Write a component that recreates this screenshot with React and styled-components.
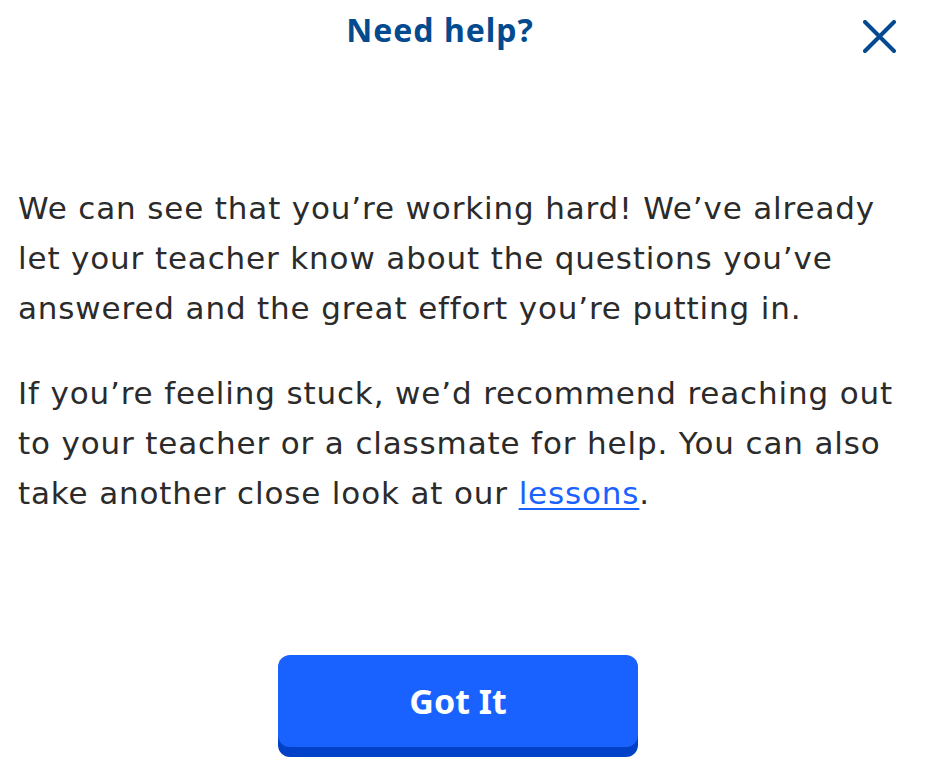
import React from "react";
import styled, { createGlobalStyle } from "styled-components";

const Global = createGlobalStyle`
  html, body { margin: 0; padding: 0; background: #ffffff; }
  body { font-family: "Noto Sans", "Open Sans", sans-serif; }
`;

const Modal = styled.div`
  box-sizing: border-box;
  width: 926px;
  height: 769px;
  display: flex;
  flex-direction: column;
  padding: 0 18px 12px 18px;
  background: #fff;
`;

const Header = styled.header`
  display: flex;
  align-items: flex-start;
  height: 70px;
`;

const Title = styled.h1`
  flex: 1;
  margin: 10px 0 0 6px;
  text-align: center;
  font-size: 32px;
  line-height: 40px;
  font-weight: 700;
  letter-spacing: 1px;
  color: #034a8f;
`;

const CloseButton = styled.button`
  width: 46px;
  height: 46px;
  margin: 13px 6px 0 0;
  padding: 0;
  border: none;
  background: transparent;
  display: flex;
  align-items: center;
  justify-content: center;
  cursor: pointer;
`;

const Content = styled.div`
  margin-top: 113px;
`;

const Paragraph = styled.p`
  margin: 0 0 35px 0;
  font-family: "DejaVu Sans", "Noto Sans", sans-serif;
  font-size: 31px;
  line-height: 50px;
  letter-spacing: 0.85px;
  color: #2b2b2b;
  font-weight: 400;
`;

const Link = styled.a`
  color: #1a62ff;
  text-decoration: underline;
  text-underline-offset: 4px;
  text-decoration-thickness: 2px;
`;

const Footer = styled.footer`
  margin-top: auto;
  display: flex;
  justify-content: center;
  padding-right: 10px;
`;

const PrimaryButton = styled.button`
  width: 360px;
  height: 92px;
  border: none;
  border-radius: 12px;
  background: #1a62ff;
  box-shadow: 0 10px 0 #0041c7;
  margin-bottom: 10px;
  color: #fff;
  font-family: inherit;
  font-size: 34px;
  font-weight: 700;
  cursor: pointer;
`;

const CloseIcon = () => (
  <svg width="33" height="33" viewBox="0 0 33 33" fill="none">
    <path d="M2 2 L31 31 M31 2 L2 31" stroke="#034a8f" strokeWidth="4" strokeLinecap="round" />
  </svg>
);

export default function App() {
  return (
    <>
      <Global />
      <Modal>
        <Header>
          <Title>Need help?</Title>
          <CloseButton aria-label="Close">
            <CloseIcon />
          </CloseButton>
        </Header>
        <Content>
          <Paragraph>
            We can see that you’re working hard! We’ve already let your teacher know about the questions you’ve answered and the great effort you’re putting in.
          </Paragraph>
          <Paragraph>
            If you’re feeling stuck, we’d recommend reaching out to your teacher or a classmate for help. You can also take another close look at our <Link href="#">lessons</Link>.
          </Paragraph>
        </Content>
        <Footer>
          <PrimaryButton>Got It</PrimaryButton>
        </Footer>
      </Modal>
    </>
  );
}
